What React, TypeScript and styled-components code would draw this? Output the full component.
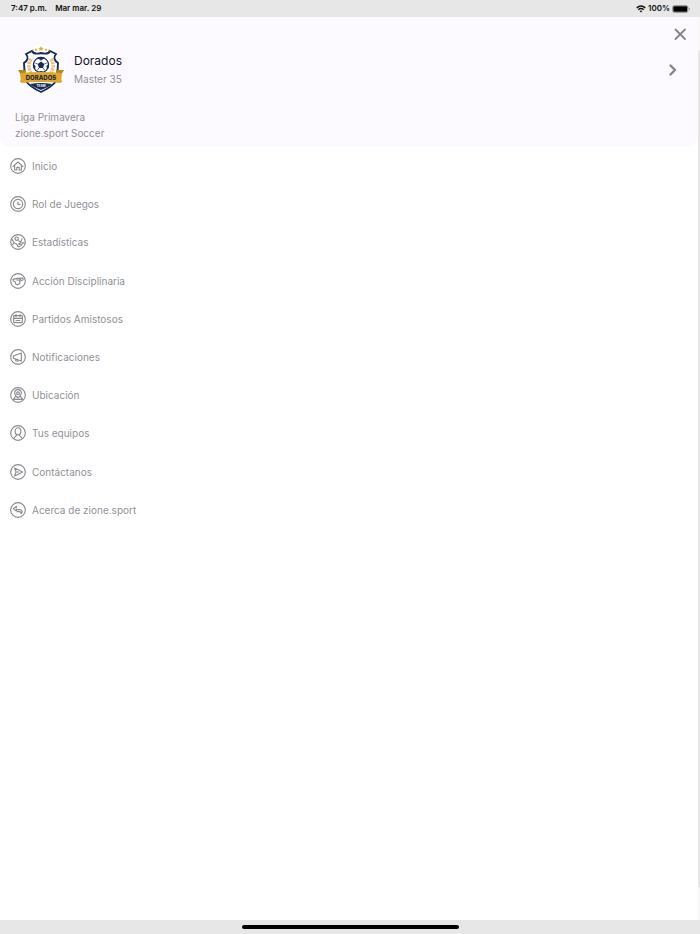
import React from "react";
import styled, { createGlobalStyle } from "styled-components";

const GlobalStyle = createGlobalStyle`
  * { box-sizing: border-box; }
  body {
    margin: 0;
    background: #fff;
    font-family: Inter, "Liberation Sans", sans-serif;
  }
  button { font: inherit; }
`;

const Screen = styled.div`
  display: flex;
  flex-direction: column;
  min-height: 100vh;
`;

const StatusBar = styled.header`
  display: flex;
  justify-content: space-between;
  align-items: center;
  height: 17px;
  padding: 0 10px 0 11px;
  background: #e7e7e7;
  color: #111;
  font-size: 8px;
  font-weight: 600;
  line-height: 17px;
`;

const StatusGroup = styled.div<{ $gap: number }>`
  display: flex;
  align-items: center;
  gap: ${({ $gap }) => $gap}px;
`;

const Body = styled.div`
  display: flex;
  flex: 1;
`;

const Panel = styled.main`
  flex: 1;
`;

const EdgeTrack = styled.div`
  display: flex;
  flex-direction: column;
  width: 2px;
  padding: 33px 0;
  background: #f8f8f8;
`;

const EdgeThumb = styled.div`
  flex: 1;
  background: #e8e8e8;
`;

const TeamHeader = styled.section`
  display: flex;
  flex-direction: column;
  height: 130px;
  border-radius: 0 0 10px 10px;
  background: #fcfafe;
`;

const CloseRow = styled.div`
  display: flex;
  justify-content: flex-end;
  height: 27px;
  padding: 9px 10px 0 0;
`;

const CloseButton = styled.button`
  display: flex;
  width: 16px;
  height: 16px;
  padding: 0;
  border: 0;
  background: none;
  color: #858488;
  cursor: pointer;
`;

const TeamButton = styled.button`
  display: flex;
  align-items: center;
  gap: 8px;
  width: 100%;
  height: 52px;
  padding: 0 16px;
  border: 0;
  background: none;
  text-align: left;
  cursor: pointer;
`;

const TeamText = styled.span`
  display: flex;
  flex: 1;
  flex-direction: column;
`;

const TeamName = styled.span`
  color: #15122b;
  font-size: 12px;
  line-height: 18px;
`;

const TeamCategory = styled.span`
  color: #929197;
  font-size: 10px;
  line-height: 18px;
`;

const LeagueInfo = styled.div`
  padding: 13px 15px 0;
  color: #929197;
  font-size: 10px;
  line-height: 16px;
`;

const MenuList = styled.ul`
  display: grid;
  grid-auto-rows: 1fr;
  height: 382px;
  margin: 0;
  padding: 0;
  list-style: none;
`;

const MenuLink = styled.a`
  display: flex;
  align-items: center;
  gap: 6px;
  height: 100%;
  padding: 0 10px;
  color: #929197;
  font-size: 10px;
  line-height: 16px;
  text-decoration: none;
`;

const MenuGlyph = styled.svg`
  width: 16px;
  height: 16px;
  fill: none;
  stroke: #8b8a90;
  stroke-width: 1.7;
  stroke-linecap: round;
  stroke-linejoin: round;
`;

const HomeBar = styled.footer`
  display: flex;
  align-items: center;
  justify-content: center;
  height: 14px;
  background: #e7e7e7;
`;

const HomeIndicator = styled.div`
  width: 31%;
  height: 4px;
  border-radius: 2px;
  background: #000;
`;

const Crest = () => (
  <svg width="50" height="50" viewBox="0 0 50 50" role="img" aria-label="Dorados Team">
    <circle cx="25" cy="25" r="24.5" fill="#fff" />
    <path d="M10 9 16 6Q18 10 25 8Q32 10 34 6L40 9Q36 14 42 18L41 35Q36 42 25 47Q14 42 9 35L8 18Q14 14 10 9Z" fill="#fff" stroke="#182c58" strokeWidth="1.9" />
    <path d="M15 14Q10 22 17 31M35 14Q40 22 33 31" fill="none" stroke="#e5c486" strokeWidth="3.5" strokeDasharray="2.500 .7" />
    <circle cx="25" cy="20" r="7.6" fill="#fff" stroke="#182c58" strokeWidth="1.2" />
    <path d="m25 16.500 3.300 2.500-1.300 4h-4l-1.300-4ZM21 13.500l4 1.500 4-1.500-4-1.500ZM17.500 19l2 2-.3 3.500-1.700-1.500ZM32.500 19l-2 2 .3 3.500 1.700-1.500ZM22 27l3-1 3 1Z" fill="#182c58" />
    <path d="M25 16v-2M28.300 19l2.500-1M27 23l2 2.500M23 23l-2 2.500M21.700 19l-2.500-1" stroke="#182c58" strokeWidth=".7" />
    <path d="M2 25h8v12H4l2-5ZM48 25h-8v12h6l-2-5Z" fill="#b68623" />
    <path d="M4 28Q25 26 46 28L45 38Q25 36 5 38Z" fill="#dda72f" />
    <path d="M14 39Q25 37 36 39Q33 42 25 45Q17 42 14 39Z" fill="#182c58" />
    <text x="25" y="35" textAnchor="middle" fontFamily="Inter, sans-serif" fontSize="6" fontWeight="800" fill="#252938">DORADOS</text>
    <text x="25" y="42" textAnchor="middle" fontFamily="Inter, sans-serif" fontSize="3" fontWeight="700" fill="#fff">TEAM</text>
    <path d="m25 1 .8 1.700 1.900.2-1.400 1.300.4 1.800-1.700-.9-1.700.9.4-1.800-1.400-1.300 1.900-.2ZM20 3l.5 1 1 .2-.7.8.2 1-1-.5-1 .5.2-1-.7-.8 1-.2ZM30 3l.5 1 1 .2-.7.8.2 1-1-.5-1 .5.2-1-.7-.8 1-.2Z" fill="#e1ad3a" />
    <circle cx="17" cy="5" r=".8" fill="#e1ad3a" />
    <circle cx="33" cy="5" r=".8" fill="#e1ad3a" />
  </svg>
);

const WifiIcon = () => (
  <svg width="10" height="8" viewBox="0 0 10 8" fill="none" stroke="#111" strokeWidth="1.400" aria-hidden="true">
    <path d="M.7 2.900Q5-.8 9.300 2.900M2.300 4.700Q5 2.300 7.700 4.700" />
    <path d="m3.600 5.900 1.400 1.500 1.400-1.500Q5 4.900 3.600 5.900Z" fill="#111" stroke="none" />
  </svg>
);

const BatteryIcon = () => (
  <svg width="18" height="8" viewBox="0 0 18 8" aria-hidden="true">
    <rect x=".5" y=".5" width="15.500" height="7" rx="2" fill="none" stroke="#999" />
    <rect x="1.300" y="1.300" width="14" height="5.400" rx="1" fill="#000" />
    <path d="M17 2.800v2.400q1-.3 1-1.200t-1-1.200" fill="#999" />
  </svg>
);

const menuItems: { label: string; glyph: React.ReactNode }[] = [
  { label: "Inicio", glyph: <path d="m4.500 13 7.500-7 7.500 7M7 11.500v6.500h3.200v-4h3.600v4H17v-6.500" /> },
  {
    label: "Rol de Juegos",
    glyph: <><circle cx="12" cy="12" r="7" /><path d="M12 9v3.500h3" /></>,
  },
  {
    label: "Estadísticas",
    glyph: <><circle cx="10" cy="7" r="2.500" /><path d="m3 8 3 5 4 2 2 4 3-.5M6 13l-2 3M13 10l3 3 2-6M16 13l-3 2 4 2 2-4 3 .5" /></>,
  },
  {
    label: "Acción Disciplinaria",
    glyph: <path d="M4.500 9.500 11 8l8.500-.5v3l-5 1.500q1.500 5-3 5.500-4 0-3.500-4.500L5 12ZM10 10.500h4l2-1.500" />,
  },
  {
    label: "Partidos Amistosos",
    glyph: <><rect x="5.500" y="7" width="13" height="10.500" rx="1" /><path d="M5.500 11h13M9 5.500v3m6-3v3M9 14.300h6" /></>,
  },
  {
    label: "Notificaciones",
    glyph: <path d="M5 10.500 17 6v12L5 14ZM8 15l1 3h3l-.5-2" />,
  },
  {
    label: "Ubicación",
    glyph: <><path d="M12 16.500q-5-4-5-7.500a5 5 0 0 1 10 0q0 3.500-5 7.500ZM8 14.500 5 18.500h14l-3-4" /><circle cx="12" cy="9.300" r="2" /></>,
  },
  {
    label: "Tus equipos",
    glyph: <><ellipse cx="12" cy="9.500" rx="4.300" ry="5.300" /><path d="M9.500 14v2L5.500 20M14.500 14v2l4 4" /></>,
  },
  { label: "Contáctanos", glyph: <path d="m7 6 12 6-12 6 2-6ZM9 12h4" /> },
  {
    label: "Acerca de zione.sport",
    glyph: <path d="M9.500 6.500 5 10l4.500 3.500v-2h4.500q3 0 4.500 2.500L17 17.500q-.5-3-3-3h-3M9.500 6.500v2.500" />,
  },
];

export default function App() {
  return (
    <Screen>
      <GlobalStyle />
      <StatusBar>
        <StatusGroup $gap={8}>
          <span>7:47 p.m.</span>
          <span>Mar mar. 29</span>
        </StatusGroup>
        <StatusGroup $gap={2}>
          <WifiIcon />
          <span>100%</span>
          <BatteryIcon />
        </StatusGroup>
      </StatusBar>
      <Body>
        <Panel>
          <TeamHeader>
            <CloseRow>
              <CloseButton aria-label="Cerrar">
                <svg width="16" height="16" viewBox="0 0 16 16" aria-hidden="true">
                  <path d="m3.500 3.500 9.500 9.500M13 3.500 3.500 13" stroke="currentColor" strokeWidth="1.800" strokeLinecap="round" />
                </svg>
              </CloseButton>
            </CloseRow>
            <TeamButton>
              <Crest />
              <TeamText>
                <TeamName>Dorados</TeamName>
                <TeamCategory>Master 35</TeamCategory>
              </TeamText>
              <svg width="16" height="16" viewBox="0 0 16 16" aria-hidden="true">
                <path d="m4.500 3.500 4.500 4.500-4.500 4.500" fill="none" stroke="#858488" strokeWidth="2.400" strokeLinecap="round" strokeLinejoin="round" />
              </svg>
            </TeamButton>
            <LeagueInfo>
              <div>Liga Primavera</div>
              <div>zione.sport Soccer</div>
            </LeagueInfo>
          </TeamHeader>
          <nav>
            <MenuList>
              {menuItems.map(({ label, glyph }) => (
                <li key={label}>
                  <MenuLink href="#">
                    <MenuGlyph viewBox="0 0 24 24" aria-hidden="true">
                      <circle cx="12" cy="12" r="11" />
                      {glyph}
                    </MenuGlyph>
                    {label}
                  </MenuLink>
                </li>
              ))}
            </MenuList>
          </nav>
        </Panel>
        <EdgeTrack>
          <EdgeThumb />
        </EdgeTrack>
      </Body>
      <HomeBar>
        <HomeIndicator />
      </HomeBar>
    </Screen>
  );
}
